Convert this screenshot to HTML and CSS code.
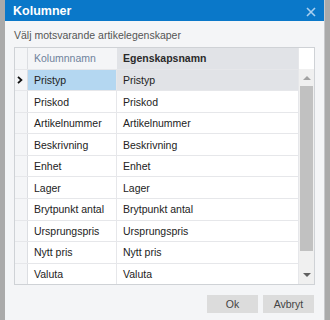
FILE: index.html
```html
<!DOCTYPE html>
<html>
<head>
<meta charset="utf-8">
<link rel="stylesheet" href="styles.css">
</head>
<body>
<div class="dialog">
  <div class="titlebar">
    <span class="title">Kolumner</span>
    <svg class="close" width="10" height="10" viewBox="0 0 10 10"><path d="M1 1L9 9M9 1L1 9" stroke="#a9d0f0" stroke-width="1.6" fill="none"/></svg>
  </div>
  <div class="content">
    <div class="hint">Välj motsvarande artikelegenskaper</div>
    <div class="table">
      <div class="grid">
        <div class="hrow">
          <div class="rh"></div>
          <div class="c1 h1">Kolumnnamn</div>
          <div class="c2 h2">Egenskapsnamn</div>
        </div>
        <div class="row sel"><div class="rh"><svg width="6" height="8" viewBox="0 0 6 8"><path d="M1 0.8L4.4 4L1 7.2" stroke="#111" stroke-width="1.8" fill="none"/></svg></div><div class="c1">Pristyp</div><div class="c2">Pristyp</div></div>
        <div class="row"><div class="rh"></div><div class="c1">Priskod</div><div class="c2">Priskod</div></div>
        <div class="row"><div class="rh"></div><div class="c1">Artikelnummer</div><div class="c2">Artikelnummer</div></div>
        <div class="row"><div class="rh"></div><div class="c1">Beskrivning</div><div class="c2">Beskrivning</div></div>
        <div class="row"><div class="rh"></div><div class="c1">Enhet</div><div class="c2">Enhet</div></div>
        <div class="row"><div class="rh"></div><div class="c1">Lager</div><div class="c2">Lager</div></div>
        <div class="row"><div class="rh"></div><div class="c1">Brytpunkt antal</div><div class="c2">Brytpunkt antal</div></div>
        <div class="row"><div class="rh"></div><div class="c1">Ursprungspris</div><div class="c2">Ursprungspris</div></div>
        <div class="row"><div class="rh"></div><div class="c1">Nytt pris</div><div class="c2">Nytt pris</div></div>
        <div class="row last"><div class="rh"></div><div class="c1">Valuta</div><div class="c2">Valuta</div></div>
      </div>
      <div class="scroll">
        <div class="shead"></div>
        <div class="strack">
          <div class="arrow up"></div>
          <div class="thumb"></div>
          <div class="arrow down"></div>
        </div>
      </div>
    </div>
    <div class="buttons">
      <div class="btn ok">Ok</div>
      <div class="btn">Avbryt</div>
    </div>
  </div>
</div>
</body>
</html>
```
FILE: styles.css
```css
* { box-sizing: border-box; }
html, body { margin: 0; padding: 0; }
body {
  background: #aaaaaa;
  font-family: "Liberation Sans", Arial, sans-serif;
  width: 330px;
  height: 320px;
  overflow: hidden;
}
.dialog {
  margin-left: 5px;
  width: 320px;
  height: 320px;
  background: #f4f5f7;
  border-right: 1px solid #c8c9cc;
  display: flex;
  flex-direction: column;
}
.titlebar {
  height: 21px;
  background: #0a78c9;
  display: flex;
  align-items: center;
  justify-content: space-between;
  padding: 0 8px 0 8px;
}
.title {
  color: #fff;
  font-weight: bold;
  font-size: 12.5px;
}
.close { margin-top: 2px; }
.content {
  flex: 1;
  padding: 8px 9px 0 9px;
  display: flex;
  flex-direction: column;
}
.hint {
  font-size: 10.5px;
  color: #555;
  height: 18px;
  line-height: 12px;
  padding-top: 0px;
}
.table {
  width: 301px;
  height: 238px;
  border: 1px solid #cfd2d6;
  background: #fff;
  display: flex;
}
.grid {
  width: 283px;
  display: flex;
  flex-direction: column;
}
.hrow, .row {
  display: flex;
  font-size: 10.5px;
}
.hrow { height: 21px; }
.row {
  height: 21.6px;
  border-top: 1px solid #e6e7ea;
}
.rh {
  width: 13px;
  background: #f4f5f7;
  border-right: 1px solid #dcdee2;
  display: flex;
  align-items: center;
  justify-content: center;
  padding-right: 3px;
}
.c1 {
  width: 89px;
  border-right: 1px solid #e6e7ea;
  padding-left: 6px;
  display: flex;
  align-items: center;
  color: #222;
}
.c2 {
  flex: 1;
  padding-left: 6px;
  display: flex;
  align-items: center;
  color: #222;
}
.h1 {
  background: #f4f5f7;
  color: #6f829c;
  border-right: none;
}
.h2 {
  background: #e1e3e7;
  font-weight: bold;
  color: #2a2a2a;
}
.sel .c1 { background: #b4d7f1; }
.sel .c2 { background: #e1e3e7; }
.scroll {
  flex: 1;
  display: flex;
  flex-direction: column;
  border-left: 1px solid #e6e7ea;
}
.shead { height: 21px; background: #fff; }
.strack {
  flex: 1;
  background: #f0f0f0;
  display: flex;
  flex-direction: column;
  align-items: center;
}
.arrow {
  width: 0; height: 0;
  border-left: 4px solid transparent;
  border-right: 4px solid transparent;
}
.up { border-bottom: 4px solid #a3a3a3; margin-top: 7px; }
.down { border-top: 4px solid #606060; margin-top: auto; margin-bottom: 7px; }
.thumb {
  width: 13px;
  height: 165px;
  background: #c1c1c1;
  margin-top: 6px;
}
.buttons {
  display: flex;
  justify-content: flex-end;
  gap: 5px;
  margin-top: 10px;
  padding-right: 1px;
}
.btn {
  width: 51px;
  height: 18px;
  background: #dcdcdc;
  color: #444;
  font-size: 10.5px;
  display: flex;
  align-items: center;
  justify-content: center;
}
```
